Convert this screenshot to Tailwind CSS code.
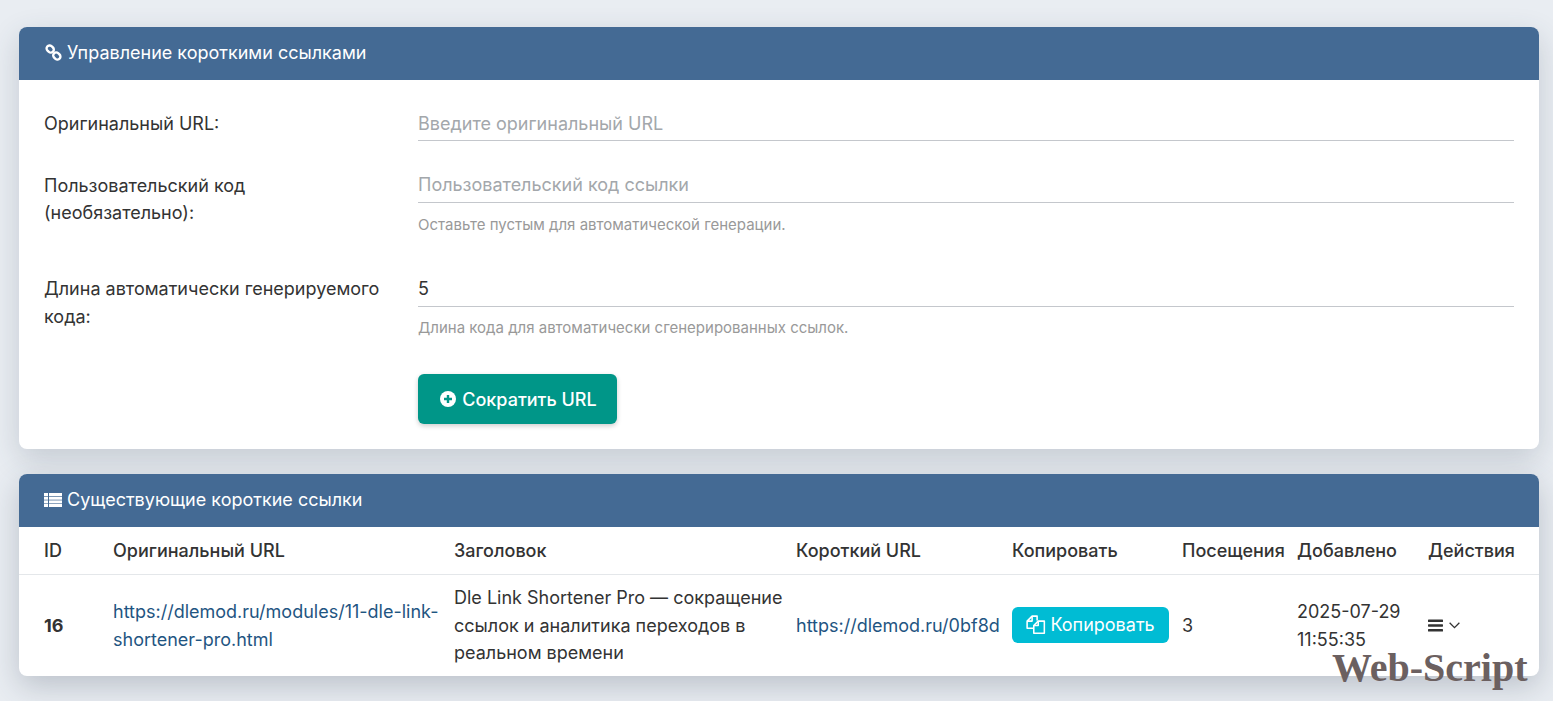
<!DOCTYPE html>
<html lang="ru">
<head>
  <meta charset="UTF-8">
  <meta name="viewport" content="width=device-width, initial-scale=1.0">
  <title>Короткие ссылки</title>
  <script src="https://cdn.jsdelivr.net/npm/@tailwindcss/browser@4"></script>
</head>
<body class="relative h-[701px] overflow-hidden bg-[#e9edf2] font-['Inter',sans-serif] text-[18px] text-[#333333]">

  <div class="pt-[27px] pl-[19px] pr-[14px]">

    <!-- add link form -->
    <section class="h-[422px] rounded-lg bg-white shadow-[0_10px_30px_rgba(50,65,85,0.2)]">
      <h2 class="flex h-[53px] items-center gap-[5px] rounded-t-lg bg-[#446a94] pb-[2px] pl-[26px] font-normal text-white">
        <svg class="h-[17px] w-[17px]" viewBox="0 0 17 17" fill="none" stroke="white" stroke-width="2.4">
          <rect x="1.4" y="2" width="7.6" height="6" rx="3" transform="rotate(40 5.2 5)"/>
          <rect x="8" y="9" width="7.6" height="6" rx="3" transform="rotate(40 11.8 12)"/>
        </svg>
        Управление короткими ссылками
      </h2>
      <div class="px-[25px]">
        <div class="flex pt-[31px]">
          <label class="w-[374px] leading-[26px]">Оригинальный URL:</label>
          <div class="h-[30px] flex-1 border-b border-[#c4c7cc] leading-[26px] text-[#a3a7ab]">Введите оригинальный URL</div>
        </div>
        <div class="flex pt-[31px]">
          <label class="w-[374px] leading-[27px]">Пользовательский код<br>(необязательно):</label>
          <div class="flex-1">
            <div class="h-[31px] border-b border-[#c4c7cc] leading-[26px] text-[#a3a7ab]">Пользовательский код ссылки</div>
            <p class="pt-[12px] text-[15px] leading-[20px] text-[#999999]">Оставьте пустым для автоматической генерации.</p>
          </div>
        </div>
        <div class="flex pt-[40px]">
          <label class="w-[374px] leading-[28px]">Длина автоматически генерируемого<br>кода:</label>
          <div class="flex-1">
            <div class="h-[32px] border-b border-[#c4c7cc] leading-[28px]">5</div>
            <p class="pt-[11px] text-[15px] leading-[20px] text-[#999999]">Длина кода для автоматически сгенерированных ссылок.</p>
          </div>
        </div>
        <div class="pt-[36px] pl-[374px]">
          <button class="flex h-[50px] w-[199px] items-center justify-center gap-[6px] rounded-md bg-[#009688] pl-[2px] font-medium text-white shadow-[0_2px_5px_rgba(0,0,0,0.2)]">
            <svg class="h-4 w-4" viewBox="0 0 16 16">
              <circle cx="8" cy="8" r="8" fill="white"/>
              <path d="M8 4v8M4 8h8" stroke="#009688" stroke-width="2.4"/>
            </svg>
            Сократить URL
          </button>
        </div>
      </div>
    </section>

    <!-- links table -->
    <section class="mt-[25px] h-[202px] rounded-lg bg-white shadow-[0_10px_30px_rgba(50,65,85,0.25)]">
      <h2 class="flex h-[53px] items-center gap-[5px] rounded-t-lg bg-[#446a94] pb-[2px] pl-[25px] font-normal text-white">
        <svg class="h-[14px] w-[18px]" viewBox="0 0 18 14" fill="white">
          <rect x="0" y="0" width="4" height="3"/><rect x="5" y="0" width="13" height="3"/>
          <rect x="0" y="3.7" width="4" height="3"/><rect x="5" y="3.7" width="13" height="3"/>
          <rect x="0" y="7.4" width="4" height="3"/><rect x="5" y="7.4" width="13" height="3"/>
          <rect x="0" y="11" width="4" height="3"/><rect x="5" y="11" width="13" height="3"/>
        </svg>
        Существующие короткие ссылки
      </h2>
      <div class="grid grid-cols-[81px_341px_342px_216px_170px_115px_131px_124px] grid-rows-[48px_101px]">
        <div class="col-span-8 grid grid-cols-subgrid items-center border-b border-[#e4e7ea] font-medium">
          <div class="pl-[25px]">ID</div>
          <div class="pl-[13px]">Оригинальный URL</div>
          <div class="pl-[13px]">Заголовок</div>
          <div class="pl-[13px]">Короткий URL</div>
          <div class="pl-[13px]">Копировать</div>
          <div class="pl-[13px]">Посещения</div>
          <div class="pl-[13px]">Добавлено</div>
          <div class="pl-[13px]">Действия</div>
        </div>
        <div class="self-center pl-[25px] font-bold">16</div>
        <div class="self-center pl-[13px] leading-[27.5px] text-[#1f5582]">https://dlemod.ru/modules/11-dle-link-shortener-pro.html</div>
        <div class="self-center pl-[13px] leading-[27.5px]">Dle Link Shortener Pro — сокращение ссылок и аналитика переходов в реальном времени</div>
        <div class="self-center whitespace-nowrap pl-[13px] text-[#1f5582]">https://dlemod.ru/0bf8d</div>
        <div class="self-center pb-[2px] pl-[13px]">
          <button class="flex h-[36px] w-[157px] items-center justify-center gap-[4px] rounded-md bg-[#00bcd4] text-white">
            <svg class="h-[20px] w-[20px]" viewBox="1 1 18 18" fill="none" stroke="white" stroke-width="1.4" stroke-linejoin="round">
              <path d="M7.5 13H2V6.5L6.5 2H11v4"/>
              <path d="M6.5 2v4.5H2"/>
              <path d="M12 6.5h5.5V17.5H8V10.5z"/>
              <path d="M12 6.5v4H8"/>
            </svg>
            Копировать
          </button>
        </div>
        <div class="self-center pl-[13px]">3</div>
        <div class="self-center pl-[13px] leading-[27.5px]">2025-07-29 11:55:35</div>
        <div class="flex items-center gap-[5px] self-center pl-[13px]">
          <svg class="h-[13px] w-[15px]" viewBox="0 0 15 13" fill="#333333">
            <rect width="15" height="2.5" y="0.5" rx="0.6"/><rect width="15" height="2.5" y="5.2" rx="0.6"/><rect width="15" height="2.5" y="10" rx="0.6"/>
          </svg>
          <svg class="h-[9px] w-[13px]" viewBox="0 0 12 8" fill="none" stroke="#333333" stroke-width="1.2">
            <path d="M1.5 1.5L6 6l4.5-4.5"/>
          </svg>
        </div>
      </div>
    </section>
  </div>

  <!-- watermark over the page -->
  <div class="absolute left-[1332px] top-[643px] font-['Liberation_Serif',serif] text-[40px] leading-[50px] font-bold text-[#6b6060]">Web-Script</div>

</body>
</html>
